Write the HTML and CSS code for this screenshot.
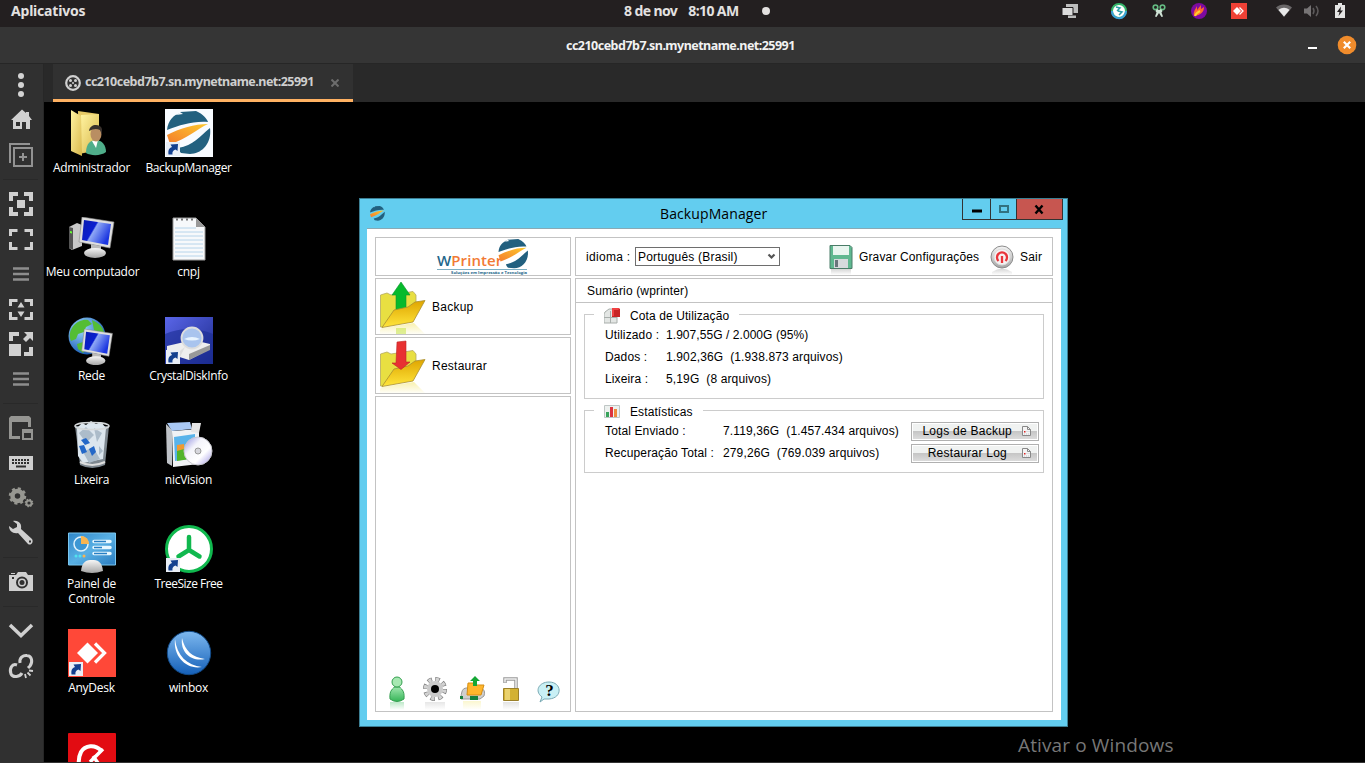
FILE: index.html
```html
<!DOCTYPE html>
<html lang="pt-BR">
<head>
<meta charset="utf-8">
<title>cc210cebd7b7.sn.mynetname.net:25991</title>
<link rel="stylesheet" href="styles.css">
</head>
<body>
<svg class="defs" width="0" height="0">
  <defs>
    <linearGradient id="gFolder" x1="0" y1="0" x2="1" y2="1"><stop offset="0" stop-color="#fff3a0"/><stop offset="1" stop-color="#d9b84c"/></linearGradient>
    <linearGradient id="gScreen" x1="0" y1="0" x2="1" y2="0.5"><stop offset="0" stop-color="#0a1cae"/><stop offset=".45" stop-color="#0a1ed0"/><stop offset=".5" stop-color="#8fa8f5"/><stop offset="1" stop-color="#1a35e0"/></linearGradient>
    <linearGradient id="gMetal" x1="0" y1="0" x2="0" y2="1"><stop offset="0" stop-color="#f6f6f6"/><stop offset="1" stop-color="#a5a5a5"/></linearGradient>
    <linearGradient id="gOrange" x1="0" y1="1" x2="1" y2="0"><stop offset="0" stop-color="#f47c2c"/><stop offset="1" stop-color="#fdc92e"/></linearGradient>
    <linearGradient id="gBlue" x1="0" y1="0" x2="0" y2="1"><stop offset="0" stop-color="#7db8ef"/><stop offset="1" stop-color="#1560b8"/></linearGradient>
    <linearGradient id="gYellow" x1="0" y1="0" x2="0" y2="1"><stop offset="0" stop-color="#dfa500"/><stop offset="1" stop-color="#ffe63c"/></linearGradient>
    <linearGradient id="gPanel" x1="0" y1="0" x2="1" y2="1"><stop offset="0" stop-color="#2f86c8"/><stop offset=".5" stop-color="#59b0e4"/><stop offset="1" stop-color="#2a7cc0"/></linearGradient>
    <linearGradient id="gDisk" x1="0" y1="0" x2="1" y2="1"><stop offset="0" stop-color="#5a66e8"/><stop offset="1" stop-color="#1c2a8c"/></linearGradient>
    <radialGradient id="gGlobe" cx=".35" cy=".3" r=".8"><stop offset="0" stop-color="#9fd8ff"/><stop offset="1" stop-color="#0b4fae"/></radialGradient>
    <linearGradient id="gGreen" x1="0" y1="0" x2="0" y2="1"><stop offset="0" stop-color="#9fe6ae"/><stop offset="1" stop-color="#35b557"/></linearGradient>
    <linearGradient id="gDisc" x1="0" y1="0" x2="1" y2="1"><stop offset="0" stop-color="#8d8be0"/><stop offset=".35" stop-color="#f4f4fb"/><stop offset=".65" stop-color="#ffffff"/><stop offset="1" stop-color="#9f95e6"/></linearGradient>
    <linearGradient id="gFade" x1="0" y1="0" x2="0" y2="1"><stop offset="0" stop-color="#f1e04e" stop-opacity=".45"/><stop offset="1" stop-color="#f1e04e" stop-opacity="0.05"/></linearGradient>
    <linearGradient id="gFadeGreen" x1="0" y1="0" x2="0" y2="1"><stop offset="0" stop-color="#5cc878" stop-opacity=".4"/><stop offset="1" stop-color="#5cc878" stop-opacity="0"/></linearGradient>
    <linearGradient id="gShade" x1="0" y1="0" x2="0" y2="1"><stop offset="0" stop-color="#999" stop-opacity=".4"/><stop offset="1" stop-color="#999" stop-opacity="0"/></linearGradient>
    <symbol id="shortcut" viewBox="0 0 14 14"><rect width="14" height="14" fill="#e9eef6"/><path d="M2.500 12.500C2 8 3 6 6 5L4.500 2.500 12 2 11.500 9 9.500 7.500C7 8.500 6 10 6.500 12.500Z" fill="#123f8f"/></symbol>
    <symbol id="ball" viewBox="0 0 44 44"><path d="M0 19C1 9 7 4 13 2L9 4 16 3 13 1 29 0C36 3 40 8 41 11 25 10 14 14 0 19Z" fill="#22607f"/><path d="M0 24C14 17 27 13 41 13 30 18 20 28 3 33Z" fill="url(#gOrange)"/><path d="M43 17C45 32 35 43 23 43L14 42C12 40 11 38 11 37 27 34 32 26 43 17Z" fill="#22607f"/></symbol>
    <symbol id="monitor" viewBox="0 0 36 42"><path d="M3 0 35 5 31 31 0 25Z" fill="#dedede" stroke="#888" stroke-width=".6"/><path d="M5 3 32 7 29 28 3 23Z" fill="url(#gScreen)"/><path d="M12 27 22 29 22 34 12 34Z" fill="#bbb"/><ellipse cx="16" cy="36" rx="11" ry="5" fill="url(#gMetal)"/></symbol>
    <symbol id="folderBack" viewBox="0 0 46 54"><path d="M.5 15 7 13 11 15 33 11.500 36 15V26L2 47H.5Z" fill="#e8df42" stroke="#b5aa60" stroke-width=".8"/><path d="M2 48 34 43 45 54H0V50Z" fill="url(#gFade)"/></symbol>
    <symbol id="folderFront" viewBox="0 0 46 54"><path d="M2 47.500 14 30 28 27 35 22 45 20.500 33 42Z" fill="url(#gYellow)" stroke="#a98f30" stroke-width=".8"/></symbol>
    <symbol id="sheet" viewBox="0 0 9 10"><path d="M.5.5h5l3 3v6h-8z" fill="#f4f4f4" stroke="#888"/><path d="M5.500.5v3h3" fill="none" stroke="#888"/><path d="M2 5h1.500v1.500H2z" fill="#d22"/><path d="M4.500 5.500h3M2 8h5" stroke="#c3c8cf" stroke-dasharray="1 1"/></symbol>
  </defs>
</svg>

<header class="topbar">
  <span class="apps">Aplicativos</span>
  <span class="clock"><span class="date">8 de nov</span><span class="time">8:10 AM</span><i class="dot"></i></span>
  <svg class="tray" width="335" height="27" viewBox="0 0 335 27">
    <path d="M36 4h12v9h-12z" fill="#bdbdbd"/><path d="M32 7.500h11v8h-11z" fill="#dcdcdc" stroke="#231f20"/><path d="M38 15.500h8v2.500h-8z" fill="#bdbdbd"/>
    <circle cx="89" cy="11" r="7" fill="#fff" stroke="#35b56a" stroke-width="2"/><path d="M82 11a7 7 0 0 0 12 5 7 7 0 0 0 2-5" fill="none" stroke="#3ba0dc" stroke-width="2"/><path d="M86 7l4 1-3 3M88 11l4 1-3 3" fill="none" stroke="#2ca0a8" stroke-width="1.500"/>
    <g fill="none" stroke="#65bd83" stroke-width="1.600"><circle cx="125.500" cy="7.300" r="2.300"/><circle cx="132.500" cy="7.300" r="2.300"/></g><path d="M127 9l2 1 2-1 1.500 2-1 1.500 1.500 4-1.500.5-2.500-4-2.500 4-1.500-.5 1.500-4-1-1.500z" fill="#cfe3d5"/>
    <circle cx="169" cy="11" r="8" fill="#7d0aa0"/><path d="M164 16c-1-4 1-6 3-10v4l4-5v4l3-2c0 5-3 8-10 9z" fill="#ff6a2f"/><path d="M165 16c1-3 3-4 5-5" stroke="#ffd02a" stroke-width="2" fill="none"/>
    <path d="M201 3h16v16h-16z" fill="#ef4136"/><path d="M203 11l4-4 4 4-4 4z" fill="#fff"/><path d="M209.500 7.500l3.500 3.500-3.500 3.500" stroke="#fff" stroke-width="1.300" fill="none"/>
    <path d="M246 7.500C250 3.500 258 3.500 262 7.500L254 17Z" fill="#6a6768"/><path d="M248.500 10C252 7 256 7 259.500 10L254 16.500Z" fill="#e8e8e8"/>
    <path d="M274 8.500h3l4-3.500v12l-4-3.500h-3z" fill="#777475"/><path d="M283 8q2 3 0 6M286 6q4 5 0 10" fill="none" stroke="#5e5b5c" stroke-width="1.500"/>
    <path d="M308 3h4v2h3v13h-10V5h3z" fill="#e4e4e4"/><path d="M311 6.500l-4 5.500h2.500l-1 4 4.500-5.500h-2.500z" fill="#231f20"/>
  </svg>
</header>
<div class="titlebar">
  <span class="host-title">cc210cebd7b7.sn.mynetname.net:25991</span>
  <i class="minimize"></i>
  <svg class="close" width="20" height="20"><circle cx="10" cy="10" r="9.300" fill="#f08c2c"/><path d="M6.800 6.800l6.400 6.400M13.200 6.800l-6.400 6.400" stroke="#fff" stroke-width="2.200"/></svg>
</div>

<div class="workspace">
<nav class="toolbar">
  <svg class="tool" viewBox="0 0 24 24"><g fill="#d3d3d3"><circle cx="12" cy="3" r="3"/><circle cx="12" cy="12" r="3"/><circle cx="12" cy="21" r="3"/></g></svg>
  <svg class="tool" viewBox="0 0 24 24"><path fill="#d0d0d0" fill-rule="evenodd" d="M13 1.500 17 5V4h3v4l3 4h-2v9h-4v-7h-4v7H4V12H2zM7 14h4v4H7z"/></svg>
  <svg class="tool" viewBox="0 0 24 24" fill="none" stroke="#929292" stroke-width="2"><path d="M1 20V1h20M5 5h18v18H5zM10 14h8M14 10v8"/></svg>
  <hr class="rule">
  <svg class="tool" viewBox="0 0 24 24"><path fill="none" stroke="#d0d0d0" stroke-width="4" d="M2 9V2h7M15 2h7v7M22 15v7h-7M9 22H2v-7"/><path fill="#d0d0d0" d="M8 8h8v8H8z"/></svg>
  <svg class="tool" viewBox="0 0 24 24"><path fill="none" stroke="#d0d0d0" stroke-width="3" d="M1.500 9V3.500h7M15.500 3.500h7V9M22.500 15v6.500h-7M8.500 21.500h-7V15"/></svg>
  <svg class="tool" viewBox="0 0 24 24"><path stroke="#8d8d8d" stroke-width="2.500" d="M4 6.500h16M4 12h16M4 17.500h16"/></svg>
  <svg class="tool" viewBox="0 0 24 24"><path fill="none" stroke="#d0d0d0" stroke-width="3" d="M1.500 9V3.500h7M15.500 3.500h7V9M22.500 15v6.500h-7M8.500 21.500h-7V15"/><path fill="#d0d0d0" d="M12 5l3.500 5.500h-7zM12 20l-3.500-5.500h7z"/></svg>
  <svg class="tool" viewBox="0 0 24 24"><path fill="none" stroke="#d0d0d0" stroke-width="4" d="M2 9V2h8M22 15v7h-7"/><path fill="#d0d0d0" d="M0 12h12v12H0zM15 0h9v9l-3-3-4 4-3-3 4-4z"/></svg>
  <svg class="tool" viewBox="0 0 24 24"><path stroke="#8d8d8d" stroke-width="2.500" d="M4 6.500h16M4 12h16M4 17.500h16"/></svg>
  <hr class="rule">
  <svg class="tool" viewBox="0 0 24 24"><path fill="#959592" fill-rule="evenodd" d="M2 0h18l2 2v9h-3V6H3v14h8v3H0V2z"/><path fill="#959592" fill-rule="evenodd" d="M13 13h11v11H13zM15 17v5h7v-5z"/></svg>
  <svg class="tool" viewBox="0 0 24 24"><path fill="#cfcfcf" d="M0 5h24v14H0z"/><path stroke="#303030" stroke-width="2" stroke-dasharray="2 1" d="M3 9h18M3 12h18"/><path stroke="#303030" stroke-width="2" d="M7 15.500h10"/></svg>
  <svg class="tool" viewBox="0 0 24 24" fill="none" stroke="#979791"><circle cx="8.500" cy="10" r="5" stroke-width="4.500"/><circle cx="8.500" cy="10" r="7.500" stroke-width="2.500" stroke-dasharray="3 2.900"/><circle cx="20" cy="17" r="2.600" stroke-width="2"/><circle cx="20" cy="17" r="3.700" stroke-width="1.200" stroke-dasharray="1.500 1.400"/></svg>
  <svg class="tool" viewBox="0 0 24 24"><path fill="#d0d0d0" fill-rule="evenodd" d="M4 0C10-1 13 3 12 8L23 18C25 21 22 25 19 23L9 12C4 13 0 10 0 5L4 8 8 6V3zM20 19.500h2v2h-2z"/></svg>
  <hr class="rule">
  <svg class="tool" viewBox="0 0 24 24"><path fill="#cfcfcf" d="M0 5h7l2-3h8l2 3h5v16H0zM2 3h4v1H2z"/><circle cx="13" cy="12.500" r="5" fill="#cfcfcf" stroke="#303030" stroke-width="2"/><circle cx="13" cy="12.500" r="2.500" fill="#303030"/><path fill="#303030" d="M3 7h2v2H3z"/></svg>
  <hr class="rule">
  <svg class="tool" viewBox="0 0 24 24"><path fill="none" stroke="#d0d0d0" stroke-width="3.500" d="M1 6l11 10.500L23 6"/></svg>
  <svg class="tool" viewBox="0 0 24 24"><path fill="none" stroke="#d0d0d0" stroke-width="3" d="M11 9C10 4 14 1 18 1.500 23 2 24 8 21 12l-2 2M8 11C3 9 0 15 2 20c2 4 9 3 11-1"/><path stroke="#d0d0d0" stroke-width="1.800" d="M16 20l1 4M18.500 18.500l3 3M20 16.500l4 .5"/></svg>
</nav>
<section class="session">
  <div class="tabs"><div class="tab">
    <svg width="16" height="16"><circle cx="8" cy="8" r="6.800" fill="none" stroke="#d0d0d0" stroke-width="2.200"/><g fill="#d0d0d0"><circle cx="5.500" cy="5.500" r="1.500"/><circle cx="10.500" cy="5.500" r="1.500"/><circle cx="5.500" cy="10.500" r="1.500"/><circle cx="10.500" cy="10.500" r="1.500"/><circle cx="8" cy="8" r="1"/></g></svg>
    <span class="host">cc210cebd7b7.sn.mynetname.net:25991</span>
    <svg class="tab-x" width="8" height="8"><path d="M.5.5l7 7M7.500.5l-7 7" stroke="#6d6d6d" stroke-width="2"/></svg>
  </div></div>
  <main class="desktop">
    <div class="shortcuts">
      <div class="item"><svg viewBox="0 0 48 48"><path d="M10 2 31 5V41L11 45Z" fill="#e6c965"/><path d="M3 1 13 7 14 47 3 42Z" fill="url(#gFolder)"/><path d="M13 6 31 5V39L14 43Z" fill="url(#gFolder)"/><path d="M18 44C18 34 23 31 28 31 34 31 38 36 38 43 33 47 23 47 18 44Z" fill="#4fae8a"/><path d="M24 32l4 7 2-8z" fill="#fff"/><ellipse cx="28" cy="25" rx="5.500" ry="7.500" fill="#b98e62"/><path d="M21 22C22 14 33 15 34 20V26L32 21C28 19 25 20 21 22Z" fill="#38302c"/></svg><span>Administrador</span></div>
      <div class="item"><svg viewBox="0 0 48 48"><path fill="#f8fbff" d="M0 0h48v48H0z"/><use href="#ball" x="2" y="2" width="44" height="44"/><use href="#shortcut" x="1" y="33" width="14" height="14"/></svg><span class="tight">BackupManager</span></div>
      <div class="item"><svg viewBox="0 0 48 48"><path d="M1 14 9 10 14 12V33L4 37 1 35Z" fill="#c9c9c9"/><path d="M1 14 5 15V37L1 35Z" fill="#555"/><path d="M2 18l2 .5v2l-2-.5z" fill="#6f3"/><use href="#monitor" x="10" y="4" width="38" height="42"/></svg><span class="mc">Meu computador</span></div>
      <div class="item"><svg viewBox="0 0 48 48"><path d="M8 5H31L40 14V47H8Z" fill="#f7f9fb" stroke="#999"/><path d="M31 5V14H40Z" fill="#999"/><path d="M10 15h21M10 19h28M10 23h28M10 27h28M10 31h28M10 35h28M10 39h28M10 43h28" stroke="#b6d4ea"/><path d="M11 6.500h20" stroke="#777" stroke-width="2" stroke-dasharray="2 3"/></svg><span>cnpj</span></div>
      <div class="item"><svg viewBox="0 0 48 48"><circle cx="19" cy="19" r="18.500" fill="url(#gGlobe)"/><path d="M4 11C9 3 17 2 20 3L24 7 18 10 16 15 10 17 8 22 3 24Q0 17 4 11ZM24 3Q34 7 36 15L31 19 26 13ZM9 27l6-2 4 5-4 6-5-4z" fill="#54bd35"/><use href="#monitor" x="13" y="12" width="33" height="37"/></svg><span>Rede</span></div>
      <div class="item"><svg viewBox="0 0 48 48"><path d="M0 0h48v47H0z" fill="url(#gDisk)"/><path d="M0 17Q24 7 48 17V47H0z" fill="#1b2d92" opacity=".6"/><path d="M2 29 28 23 45 27V32L24 43 2 36Z" fill="#eee"/><path d="M24 37 45 28V33L24 43Z" fill="#999"/><path d="M16 33 20 30 15 40H10Z" fill="#ddd"/><circle cx="27" cy="21" r="10.500" fill="#a9c4ee" stroke="#ddd" stroke-width="1.800"/><path d="M19 22q8-4 16 0-8 3-16 0" fill="#e8f4ff"/><use href="#shortcut" x="1" y="33" width="14" height="14"/></svg><span class="tight">CrystalDiskInfo</span></div>
      <div class="item"><svg viewBox="0 0 48 48"><path d="M7 5 41 5 37 44Q24 50 12 44Z" fill="#7d878f"/><path d="M9 7l5-5 4 2 5-4 5 3 5-2 5 6-3 31-20 4-5-7z" fill="#dce6ee"/><path d="M11 12l7-6 8 8-8 8zM26 7l8 5-5 9zM15 31l10-5 7 12-11 4zM31 25l4 5-4 4z" fill="#acbcca"/><ellipse cx="24" cy="5" rx="17" ry="3.500" fill="none" stroke="#d5d8da" stroke-width="1.500"/><path d="M13 19l5-2 4 5-5 2zM11 25l5-1 3 7-5 2zM21 28l5-3 2 6-4 4z" fill="#2468c8"/><path d="M12 41Q24 47 37 41" stroke="#ddd" stroke-width="2" fill="none"/></svg><span>Lixeira</span></div>
      <div class="item"><svg viewBox="0 0 48 48"><path d="M1 3 7 9V45L2 42Z" fill="#bfc3c8"/><path d="M7 10 34 8V43L8 46Z" fill="#f0f2f5"/><path d="M2 2 25 1 27 8 7 10Z" fill="#a9c8f4"/><path d="M27 2h9l-2 10-8-1z" fill="#e5e5e5"/><path d="M9 16 30 13V37L10 40Z" fill="#59b3ea"/><path d="M12 27 25 24V38L12 40Z" fill="#52b42b"/><path d="M12 24l7-1v5l-7 2z" fill="#f09a32"/><circle cx="33" cy="30" r="14" fill="url(#gDisc)" stroke="#c8c8cf"/><circle cx="33" cy="30" r="3" fill="#d6d6dc" stroke="#999"/></svg><span>nicVision</span></div>
      <div class="item"><svg viewBox="0 0 48 48"><path d="M.5 8h47v32H.5z" fill="url(#gPanel)" stroke="#79c5ee"/><circle cx="13" cy="19" r="7" fill="#3c97d4" stroke="#dff2fc" stroke-width="1.500"/><path d="M13 19V11A8 8 0 0 1 21 19Z" fill="#f7b551"/><path d="M26 16.500h16M26 22.500h16M26 28.500h16" stroke="#e7f7ff" stroke-width="3.500" stroke-linecap="round"/><path d="M26 16.500h12M26 22.500h8M26 28.500h13" stroke="#287fc4" stroke-width="1.500"/><circle cx="8" cy="31" r="1.500" fill="#51e3ef"/><circle cx="12" cy="31" r="1.500" fill="#51e3ef"/><circle cx="16" cy="31" r="1.500" fill="#f7b551"/><path d="M13 46C14 36 19 35 24 35S34 36 35 46Q24 50 13 46Z" fill="url(#gMetal)"/></svg><span>Painel de<br>Controle</span></div>
      <div class="item"><svg viewBox="0 0 48 48"><circle cx="24" cy="24" r="22.500" fill="#fff" stroke="#10b84e" stroke-width="3"/><path d="M24 12V25L13.500 31.500M24 25l10.500 6.500" fill="none" stroke="#10b84e" stroke-width="4.500" stroke-linecap="round"/><use href="#shortcut" x="1" y="33" width="14" height="14"/></svg><span class="tighter">TreeSize Free</span></div>
      <div class="item"><svg viewBox="0 0 48 48"><path fill="#ff4838" d="M0 0h48v48H0z"/><path d="M9 24 19.500 13.500 30 24 19.500 34.500Z" fill="#fff"/><path d="M27 14.500 36.500 24 27 33.500" stroke="#fff" stroke-width="3.300" fill="none"/><use href="#shortcut" x="1" y="33" width="14" height="14"/></svg><span>AnyDesk</span></div>
      <div class="item"><svg viewBox="0 0 48 48"><circle cx="24" cy="24" r="21.700" fill="url(#gBlue)" stroke="#124a87"/><path d="M10 10C12 27 22 36 37 38 22 41 8 28 10 10ZM17 9C20 22 27 28 40 30 27 33 15 24 17 9Z" fill="#fff"/></svg><span>winbox</span></div>
      <div class="item"><svg viewBox="0 0 48 48"><rect width="48" height="48" rx="1" fill="#e20c12"/><path d="M33 17.500C27 11 17 12 13 19Q10 25 11 32" stroke="#fff" stroke-width="4" fill="none"/><path d="M35 16 22 29M25 23l5 7" stroke="#fff" stroke-width="3.500"/></svg></div>
    </div>
    <div class="watermark">Ativar o Windows</div>

    <div class="window">
      <div class="caption">
        <svg class="app-icon" width="15" height="15"><use href="#ball" width="15" height="15"/></svg>
        <span class="caption-text">BackupManager</span>
        <div class="controls">
          <svg width="28" height="21"><path d="M9 10.500h10v3H9z"/></svg><svg width="26" height="21"><path d="M9 7h8v6H9z" fill="none" stroke="#32717f" stroke-width="2"/></svg><svg class="red" width="46" height="21"><path d="M18.500 6.500l7 8M25.500 6.500l-7 8" stroke="#000" stroke-width="2.400"/></svg>
        </div>
      </div>
      <div class="client">
        <aside class="side">
          <div class="box brand">
            <div class="brand-name"><span class="w">W</span>Printer</div>
            <svg width="31" height="30"><use href="#ball" width="31" height="30"/></svg>
            <div class="slogan">Soluções em Impressão e Tecnologia</div>
          </div>
          <div class="box action"><svg width="46" height="54" viewBox="0 0 46 54"><use href="#folderBack" width="46" height="54"/><path d="M21 2 30 15H26V31H16V15H12Z" fill="#06ba2c" stroke="#11932d" stroke-width=".6"/><path d="M16 48h10v6H16z" fill="#bfe23a" opacity=".5"/><use href="#folderFront" width="46" height="54"/></svg><span>Backup</span></div>
          <div class="box action"><svg width="46" height="54" viewBox="0 0 46 54"><use href="#folderBack" width="46" height="54"/><use href="#folderFront" width="46" height="54"/><path d="M17 3 26 2V23H30L21 30.500 12 24H16Z" fill="#e83132" stroke="#bd2525" stroke-width=".6"/></svg><span>Restaurar</span></div>
          <div class="box tools">
            <svg viewBox="0 0 30 34"><path d="M8 23C7 13 12 13 12 11H18C18 13 23 13 22 23Q15 28 8 23Z" fill="url(#gGreen)" stroke="#35a050"/><circle cx="15" cy="6" r="5" fill="#a7e8b2" stroke="#35a050"/><path d="M8 26h14v8H8z" fill="url(#gFadeGreen)"/></svg>
            <svg viewBox="0 0 30 34"><circle cx="15" cy="13" r="10" fill="none" stroke="#777" stroke-width="4" stroke-dasharray="4.500 3.354"/><circle cx="15" cy="13" r="9.700" fill="none" stroke="#d2d2d2" stroke-width="3.400" stroke-dasharray="3.300 4.318" stroke-dashoffset="-.5"/><circle cx="15" cy="13" r="8" fill="#cacaca"/><circle cx="15" cy="13" r="4"/><path d="M5 26h20v8H5z" fill="url(#gShade)" opacity=".6"/></svg>
            <svg viewBox="0 0 30 34"><path d="M3 23Q3 12 8 12H23Q28 14 26 20L22 23Z" fill="#cfcfcf" stroke="#999"/><path d="M10 7h5l1 2h10l-3 10H9z" fill="#ffb62c" stroke="#d58e15"/><path d="M2 20h3v3H2zM12 20h8v4h-8z" fill="#16813e"/><path d="M17 0l5 5h-3v5h-4V5h-3z" fill="#14a735"/><path d="M5 25h18v8H5z" fill="url(#gFade)" opacity=".6"/></svg>
            <svg viewBox="0 0 30 34"><path d="M9 7V3h11v10" fill="none" stroke="#999" stroke-width="3.500"/><path d="M9 6.500V3h11v10" fill="none" stroke="#eee" stroke-width="1.500"/><path d="M7.500 12.500h15v12h-15z" fill="#d3b132" stroke="#9b802a"/><path d="M9 13h5v11H9z" fill="#ead26e"/><path d="M7 26h16v8H7z" fill="url(#gShade)" opacity=".7"/></svg>
            <svg viewBox="0 0 30 34"><path d="M15 6C28 6 29 22 15 23L10 23 6 26 8 21C0 15 5 6 15 6Z" fill="#c9f0f5" stroke="#7aa9b3"/><text x="15.500" y="20" class="question">?</text></svg>
          </div>
        </aside>
        <section class="content">
          <div class="box bar">
            <label>idioma :</label><div class="select"><span>Português (Brasil)</span><svg width="9" height="7"><path d="M1.500 1.500l3 3 3-3" fill="none" stroke="#555" stroke-width="2.200"/></svg></div>
            <svg class="save" width="24" height="30"><path d="M1 .5h20l2 2V23.500H1z" fill="#5fb890" stroke="#4a7c68"/><path d="M4 1h16v9H4z" fill="#e8f5ef"/><path d="M5 14h14v9H5z" fill="#d6dadd"/><path d="M6 15h3v7H6z" fill="#68757b"/><path d="M2 24h20v6H2z" fill="url(#gShade)"/></svg><span class="save-text">Gravar Configurações</span>
            <svg class="power" width="24" height="30"><circle cx="12" cy="12" r="11" fill="url(#gMetal)" stroke="#8c8c8c"/><circle cx="12" cy="12" r="8" fill="#f6f2f2" stroke="#ddd"/><path d="M8.500 16A5 5 0 1 1 15.500 16M12 11v7" fill="none" stroke="#e9353b" stroke-width="2.300"/><path d="M2 27Q12 20 22 27V30H2z" fill="url(#gShade)"/></svg><span class="exit-text">Sair</span>
          </div>
          <div class="box summary">
            <h2><span>Sumário (wprinter)</span></h2>
            <div class="group quota">
              <div class="legend"><svg width="16" height="16"><path d="M1 4 5 1H11V7H13V15H0V6z" fill="#e3e6e4" stroke="#a8aeab"/><path d="M0 9.500h13M6.500 3v12" stroke="#a8aeab"/><path d="M8 1h8v8H8z" fill="#c72525"/><path d="M8 0h8l-2 2H10v6H8z" fill="#f04242"/></svg><span>Cota de Utilização</span></div>
              <div class="row"><span>Utilizado :</span><span class="used">1.907,55G / 2.000G (95%)</span></div>
              <div class="row"><span>Dados :</span><span>1.902,36G&nbsp; (1.938.873 arquivos)</span></div>
              <div class="row"><span>Lixeira :</span><span>5,19G&nbsp; (8 arquivos)</span></div>
            </div>
            <div class="group stats">
              <div class="legend"><svg width="16" height="14"><path d="M.5.5h15v12H.5z" fill="#edf1ef" stroke="#bfc6c5"/><path d="M2 7h3v5H2z" fill="#38a35b"/><path d="M6 2h3v10H6z" fill="#dc3440"/><path d="M10 4h3v8h-3z" fill="#ef8c3c"/></svg><span>Estatísticas</span></div>
              <div class="row"><span>Total Enviado :</span><span>7.119,36G&nbsp; (1.457.434 arquivos)</span><button><span>Logs de Backup</span><svg width="9" height="10"><use href="#sheet" width="9" height="10"/></svg></button></div>
              <div class="row"><span>Recuperação Total :</span><span>279,26G&nbsp; (769.039 arquivos)</span><button><span class="b2">Restaurar Log</span><svg width="9" height="10"><use href="#sheet" width="9" height="10"/></svg></button></div>
            </div>
          </div>
        </section>
      </div>
    </div>
  </main>
</section>
</div>
</body>
</html>
```
FILE: styles.css
```css
* { box-sizing: border-box; }
body { margin: 0; width: 1365px; height: 763px; overflow: hidden; background: #000; font: 12px "Liberation Sans", Arial, sans-serif; color: #000; display: flex; flex-direction: column; }
span, label { white-space: nowrap; }
svg { display: block; flex: none; }
.defs { position: absolute; }

.topbar { height: 27px; flex: none; background: #231f20; color: #e3e1e0; display: grid; grid-template-columns: 624px 406px 335px; font: 700 14px/22px "Noto Sans", sans-serif; }
.apps { padding-left: 11px; letter-spacing: -.2px; }
.clock { display: flex; align-items: center; height: 22px; letter-spacing: -.6px; }
.time { margin-left: 11px; }
.dot { width: 8px; height: 8px; border-radius: 50%; background: #e3e1e0; position: absolute; left: 762px; top: 7px; }

.titlebar { height: 37px; flex: none; background: #353535; border-bottom: 1px solid #262626; color: #f2f2f2; display: flex; align-items: center; padding: 0 8px 0 566px; font: 700 12.5px "Noto Sans", sans-serif; }
.host-title { letter-spacing: -.52px; width: 742px; }
.minimize { width: 9px; height: 2px; background: #fff; margin: 5px 20px 0 0; }

.workspace { flex: 1; display: flex; min-height: 0; border-bottom: 1px solid #333; }
.toolbar { width: 44px; flex: none; background: #303030; border-right: 1px solid #272727; padding: 4px 0 0 9px; display: flex; flex-direction: column; }
.tool { width: 24px; height: 24px; margin: 5px 0 6px; overflow: visible; }
.rule { margin: 0 5px 0 -6px; height: 14px; flex: none; border: 0; background: linear-gradient(#292929, #292929) 0 6px / 100% 1px no-repeat; }
.session { flex: 1; display: flex; flex-direction: column; min-width: 0; }
.tabs { height: 38px; flex: none; background: #292929; padding-left: 9px; }
.tab { width: 300px; height: 38px; background: #313131; border-bottom: 3px solid #ffb162; display: flex; align-items: center; padding: 2px 0 0 12px; color: #cfcfcf; font: 700 12.5px "Noto Sans", sans-serif; }
.host { margin: -2px 0 0 4px; width: 246px; letter-spacing: -.52px; }

.desktop { flex: 1; background: #000; position: relative; overflow: hidden; }
.shortcuts { display: grid; grid-template-columns: 97px 97px; grid-auto-rows: 104px; width: 194px; margin-left: -1px; padding-top: 7px; }
.item { display: flex; flex-direction: column; align-items: center; color: #fff; text-align: center; font: 12px/15px "Open Sans", sans-serif; letter-spacing: -.25px; }
.item svg { width: 48px; height: 48px; margin-bottom: 3px; }
.tight { letter-spacing: -.36px; }
.tighter { letter-spacing: -.5px; }
.mc { margin-left: 2px; }
.watermark { position: absolute; left: 974px; top: 631px; color: #777; font: 19px/25px "Open Sans", sans-serif; letter-spacing: .13px; white-space: nowrap; }

.window { position: absolute; left: 315px; top: 96px; width: 709px; height: 529px; background: #63cdef; border: 1px solid #3c7f94; padding: 0 6px 6px 7px; display: flex; flex-direction: column; }
.caption { height: 29px; display: grid; grid-template-columns: 293px 302px auto; }
.app-icon { margin: 7px 0 0 3px; }
.caption-text { font: 14px/29px "Open Sans", sans-serif; letter-spacing: .1px; }
.controls { display: flex; height: 21px; }
.controls svg { border: solid #333; border-width: 0 0 1px 1px; }
.controls .red { background: #c75650; border-right-width: 1px; width: 47px; }
.client { flex: 1; background: #fff; border-top: 1px solid #8aa9b4; padding: 8px; display: flex; gap: 4px; min-height: 0; }
.side { width: 196px; display: flex; flex-direction: column; gap: 2px; }
.content { width: 478px; display: flex; flex-direction: column; gap: 2px; }
.box { border: 1px solid #c3c3c3; }
.brand { height: 39px; display: grid; grid-template-columns: 61px 61px 31px; grid-template-rows: 30px 7px; padding-top: 1px; }
.brand-name { grid-column: 2; font: 600 15px/18px "Open Sans", sans-serif; color: #f27a35; margin-top: 12px; height: 18px; letter-spacing: .1px; }
.w { color: #24678a; }
.slogan { grid-column: 2 / 4; border-top: 1px solid #7daec2; font: bold 4.200px/5px "Open Sans", sans-serif; color: #24678a; text-align: right; white-space: nowrap; width: 90px; }
.action { height: 57px; display: flex; align-items: center; padding-left: 4px; }
.action span { margin-left: 6px; letter-spacing: .25px; }
.tools { flex: 1; display: flex; align-items: flex-end; padding: 0 0 1px 6px; gap: 8px; }
.tools svg { width: 30px; height: 34px; }
.question { font: bold 17px "Liberation Serif", serif; text-anchor: middle; }

.bar { height: 39px; display: flex; align-items: center; padding-left: 10px; }
.bar label { width: 49px; letter-spacing: .3px; }
.select { width: 145px; height: 19px; border: 1px solid #6e6e6e; display: flex; align-items: center; justify-content: space-between; padding: 0 3px 0 2px; letter-spacing: .2px; margin-right: 49px; }
.save { margin-top: 7px; }
.save-text { margin-left: 6px; width: 131px; letter-spacing: .14px; }
.power { margin-top: 7px; }
.exit-text { margin-left: 6px; letter-spacing: .2px; }
.summary { flex: 1; }
h2 { margin: 0; height: 24px; border-bottom: 1px solid #c3c3c3; padding-left: 11px; font: 12px/24px "Liberation Sans", sans-serif; letter-spacing: .15px; }
.group { border: 1px solid #ccc; margin: 11px 8px 0; }
.quota { height: 85px; }
.stats { height: 63px; }
.legend { display: flex; align-items: center; height: 18px; margin: -8px 0 -1px 9px; padding: 0 10px; width: max-content; background: #fff; letter-spacing: .1px; }
.legend svg { margin-right: 10px; }
.row { height: 22px; display: grid; grid-template-columns: 61px 1fr; align-items: center; padding-left: 20px; letter-spacing: .13px; }
.used { letter-spacing: .06px; }
.stats .row { grid-template-columns: 118px 188px 128px; }
button { width: 128px; height: 19px; border: 1px solid #b0b0b0; outline: 1px solid #fff; outline-offset: -2px; background: linear-gradient(#f0f2f1 0 45%, #c6c6c6 50%, #dedede); font: 12px "Liberation Sans", sans-serif; color: #000; padding: 0 7px 0 0; display: flex; align-items: center; justify-content: flex-end; letter-spacing: .25px; }
button svg { margin-left: 10px; }
.b2 { margin-right: 5px; }
```
